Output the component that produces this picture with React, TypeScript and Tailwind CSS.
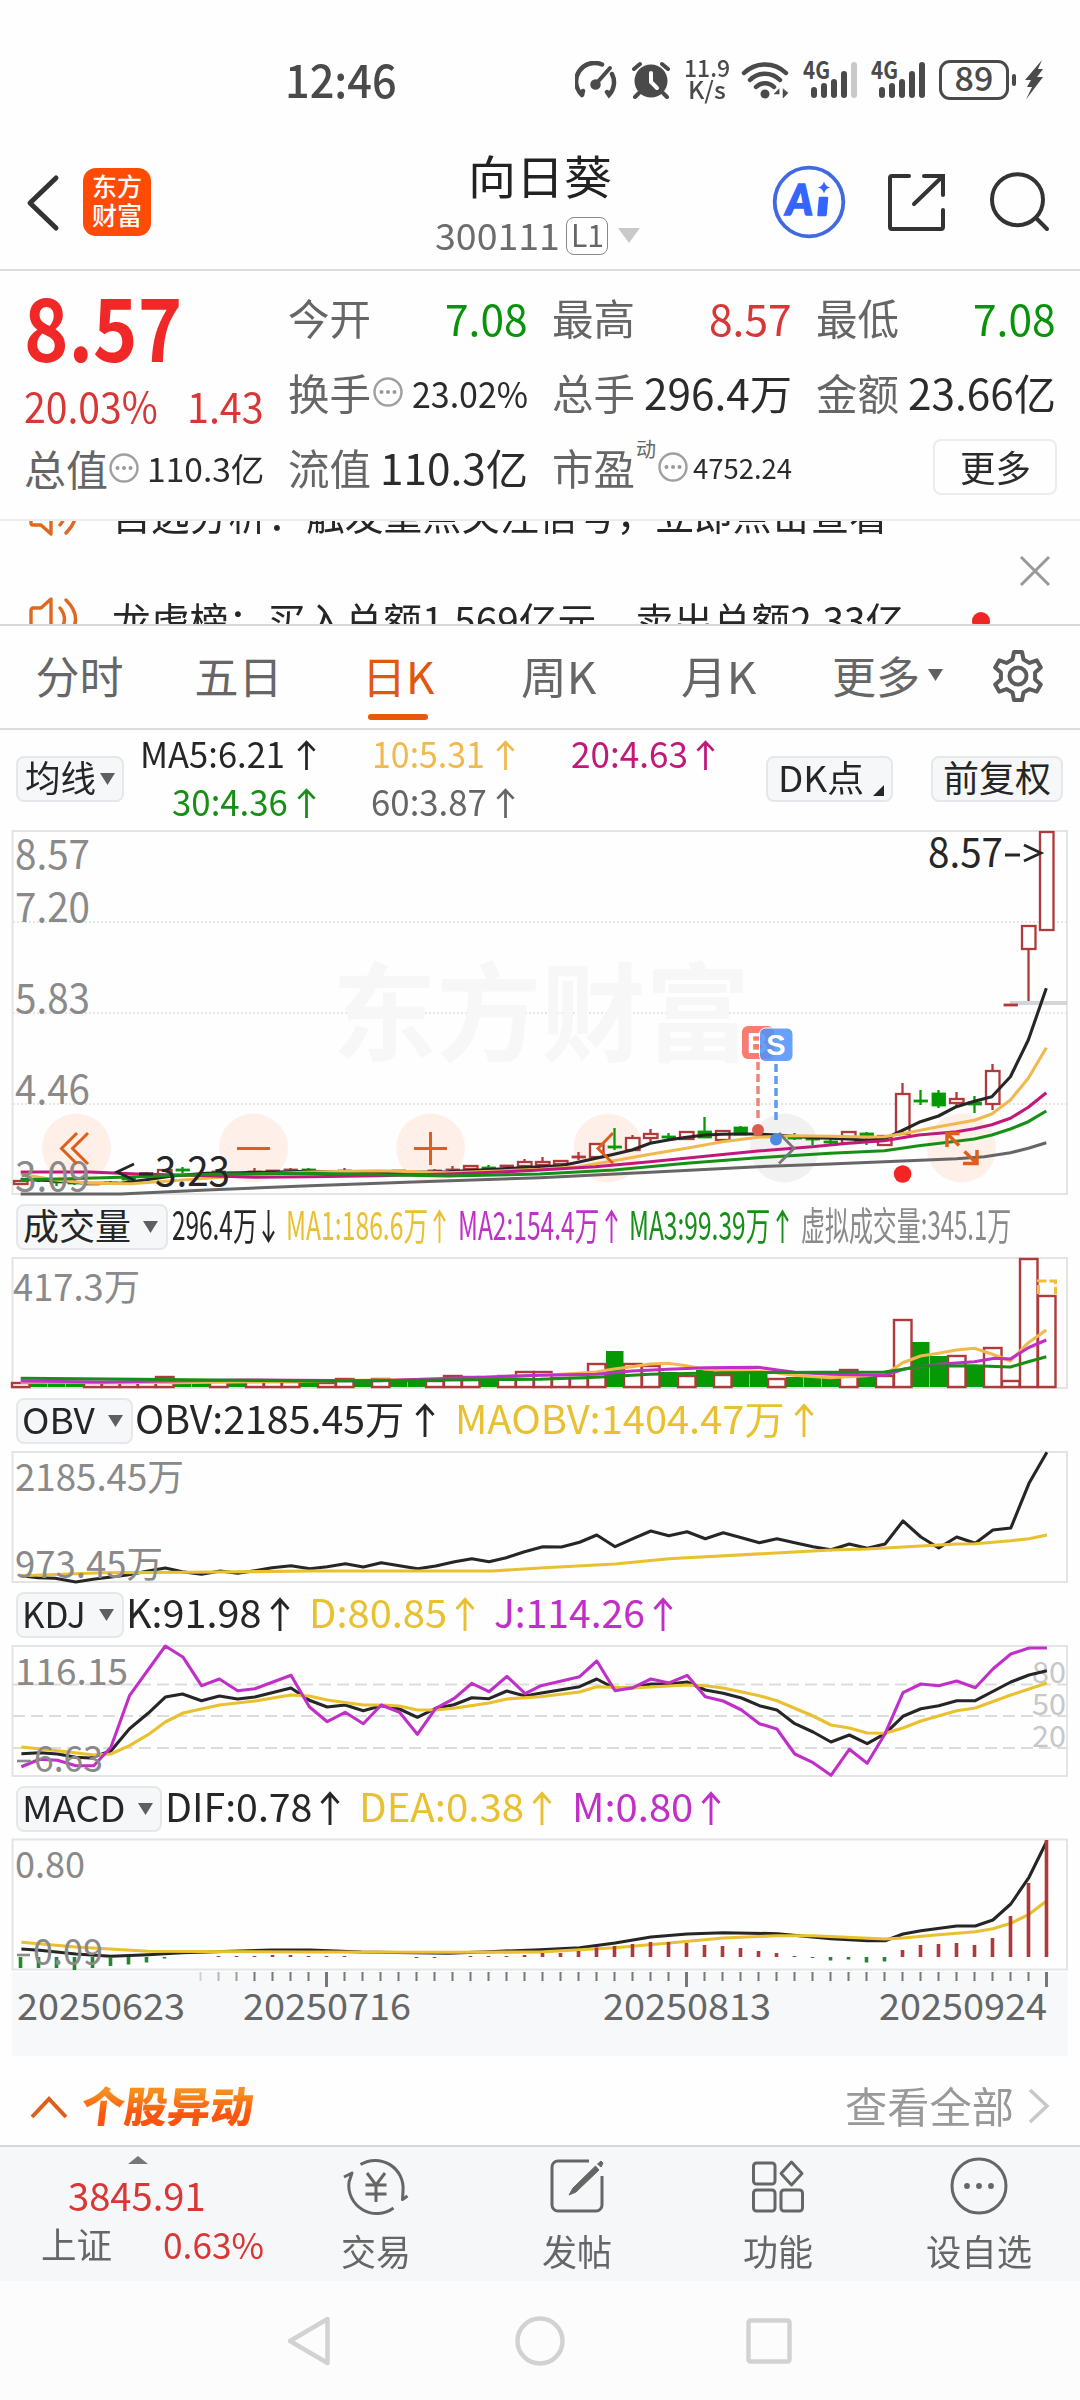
import React, { useLayoutEffect, useRef, useState } from "react";

const UP = "#b03a3a";
const DOWN = "#059a05";
const INK = "#262626";
const GOLD = "#e9c02f";
const AMBER = "#f0b94f";
const PURPLE = "#c02fc8";
const MAGENTA = "#bf1a7a";
const GREEN = "#178f17";
const GREY = "#666666";
const FRAME = "#e4e4e4";
const FONT = "'Noto Sans CJK SC', 'Noto Sans', sans-serif";

/** Text squeezed or stretched horizontally so that it fills its box. */
function Fit({ className = "", children }: { className?: string; children: React.ReactNode }) {
  const inner = useRef<HTMLSpanElement>(null);
  const [scale, setScale] = useState(1);
  useLayoutEffect(() => {
    const el = inner.current;
    if (el && el.parentElement && el.offsetWidth) setScale(el.parentElement.clientWidth / el.offsetWidth);
  }, []);
  return (
    <span className={"block shrink-0 whitespace-nowrap leading-none " + className}>
      <span ref={inner} className="inline-block origin-left" style={{ transform: `scaleX(${scale})` }}>
        {children}
      </span>
    </span>
  );
}

function Arrow({ className = "", down = false }: { className?: string; down?: boolean }) {
  return (
    <svg viewBox="0 0 20 34" preserveAspectRatio="none" className={"shrink-0 " + className} fill="none" stroke="currentColor" strokeWidth="2.9">
      {down ? <path d="M10 1v31M1.500 22.500 10 32l8.500-9.500" /> : <path d="M10 34V2.500M1.500 12 10 2.500l8.500 9.500" />}
    </svg>
  );
}

function Caret({ className = "" }: { className?: string }) {
  return (
    <svg viewBox="0 0 15 12" className={"h-3 w-[15px] shrink-0 " + className}>
      <path d="M0 0h15L7.500 12z" fill="#5f5f5f" />
    </svg>
  );
}

function Info({ className = "" }: { className?: string }) {
  return (
    <svg viewBox="0 0 30 30" className={"size-[30px] shrink-0 " + className}>
      <circle cx="15" cy="15" r="13.500" fill="none" stroke="#a0a0a0" strokeWidth="2.400" />
      <g fill="#999">
        <circle cx="8.500" cy="15" r="2" />
        <circle cx="15" cy="15" r="2" />
        <circle cx="21.500" cy="15" r="2" />
      </g>
    </svg>
  );
}

function Signal({ weak = false }: { weak?: boolean }) {
  return (
    <svg viewBox="0 0 56 40" className="h-10 w-14 shrink-0">
      <text x="0" y="19" fontSize="24" fontWeight="700" fontFamily={FONT} fill="#4a4a4a" textLength="27" lengthAdjust="spacingAndGlyphs">4G</text>
      <g stroke="#4a4a4a" strokeWidth="6" strokeLinecap="round">
        <path d="M11 30v5M21 26v9M31 22v13M41 14v21" />
        <path d="M51 5v30" stroke={weak ? "#c9c9c9" : "#4a4a4a"} />
      </g>
    </svg>
  );
}

function StatusBar() {
  return (
    <div className="flex h-[120px] shrink-0 pt-[58px] text-[#4a4a4a]">
      <Fit className="ml-[285px] mt-[-3px] w-28 text-[46px] font-medium">12:46</Fit>
      <svg viewBox="0 0 42 38" className="ml-[178px] mt-[3px] h-[38px] w-[42px] shrink-0" fill="none" stroke="#4a4a4a" strokeWidth="4.500" strokeLinecap="round">
        <path d="M27 3.500A18.500 18.500 0 0 0 7 34M7 34l1-4M37 13a18.500 18.500 0 0 1-3 21l-2-3" />
        <path d="M35 7 20 24" strokeWidth="4" />
        <circle cx="20.500" cy="23.500" r="3" fill="#4a4a4a" />
      </svg>
      <svg viewBox="0 0 40 38" className="ml-[14px] mt-[3px] h-[38px] w-10 shrink-0">
        <circle cx="20" cy="20" r="16.500" fill="#4a4a4a" />
        <path d="M3 8 9 3M37 8l-6-5M8 32l-4 4M32 32l4 4" stroke="#4a4a4a" strokeWidth="4" strokeLinecap="round" />
        <path d="M20 12v9l6 6" stroke="#fff" strokeWidth="4" fill="none" strokeLinecap="round" />
      </svg>
      <div className="ml-[13px] flex flex-col items-center">
        <Fit className="mt-[-3px] w-[46px] text-[24px] font-medium">11.9</Fit>
        <Fit className="mt-[-2px] w-[38px] text-[24px] font-medium">K/s</Fit>
      </div>
      <svg viewBox="0 0 48 38" className="ml-[11px] mt-[3px] h-[38px] w-12 shrink-0" fill="none" stroke="#4a4a4a" strokeWidth="4.500" strokeLinecap="round">
        <path d="M3 12a30 30 0 0 1 42 0M9 19a21 21 0 0 1 30 0M15 26a12.500 12.500 0 0 1 18 0" />
        <circle cx="24" cy="33" r="3" fill="#4a4a4a" strokeWidth="3" />
        <path d="m38 28-5 5h5zM42 28v9l5-5z" fill="#4a4a4a" strokeWidth="0.500" />
      </svg>
      <div className="ml-[14px] mt-[2px]"><Signal weak /></div>
      <div className="ml-[12px] mt-[2px]"><Signal /></div>
      <div className="ml-[12px] mt-[2px] flex h-10 w-[70px] shrink-0 justify-center rounded-[11px] border-[3px] border-[#4a4a4a]">
        <Fit className="mt-[-3px] w-[39px] text-[34px] font-medium">89</Fit>
      </div>
      <div className="ml-[3px] mt-[16px] h-3 w-1 rounded-sm bg-[#4a4a4a]" />
      <svg viewBox="0 0 20 40" className="ml-[8px] mt-[2px] h-10 w-5 shrink-0">
        <path d="M18 0 1 20h6l-4 7h5L2 39.500 19 17h-6l6-8h-5z" fill="#4a4a4a" />
      </svg>
    </div>
  );
}

function Header() {
  return (
    <div className="flex h-[151px] shrink-0 border-b-2 border-[#dcdcdc]">
      <svg viewBox="0 0 34 58" className="ml-[26px] mt-[54px] h-[58px] w-[34px] shrink-0" fill="none" stroke="#333" strokeWidth="5" strokeLinecap="round" strokeLinejoin="round">
        <path d="M30 4 4 29l26 25" />
      </svg>
      <div className="ml-[23px] mt-[48px] flex size-[68px] shrink-0 flex-col items-center rounded-[13px] bg-[#ff4b06] pt-[5px] text-[25px] font-medium leading-none text-white">
        <Fit className="w-[50px]">东方</Fit>
        <Fit className="mt-[4px] w-[50px]">财富</Fit>
      </div>
      <div className="ml-[283px] flex w-[208px] shrink-0 flex-col">
        <Fit className="ml-[34px] mt-[31px] w-[144px] text-[46px] text-[#222]">向日葵</Fit>
        <div className="mt-[19px] flex text-[36px] text-[#6c6c6c]">
          <Fit className="ml-px w-[125px]">300111</Fit>
          <div className="ml-[6px] mt-[1px] flex h-[38px] w-[42px] shrink-0 justify-center rounded-lg border border-[#888]">
            <Fit className="w-[33px] text-[31px] text-[#666]">L1</Fit>
          </div>
          <svg viewBox="0 0 22 15" className="ml-[10px] mt-[12px] h-[15px] w-[22px] shrink-0"><path d="M0 0h22L11 15z" fill="#c9c9c9" /></svg>
        </div>
      </div>
      <svg viewBox="0 0 74 74" className="ml-[130px] mt-[45px] size-[74px] shrink-0">
        <circle cx="37" cy="37" r="34.300" fill="none" stroke="#4169e1" strokeWidth="3.800" />
        <text x="14" y="50" fontFamily="Lato, sans-serif" fontWeight="900" fontSize="42" fontStyle="italic" fill="#3565ff" stroke="#3565ff" strokeWidth="1.500" textLength="27" lengthAdjust="spacingAndGlyphs">A</text>
        <path d="M48 33h7l-1.500 17h-7z" fill="#3565ff" stroke="#3565ff" strokeWidth="2.500" strokeLinejoin="round" />
        <path d="M52 16.500q1.500 5 6 6-4.500 1-6 6-1.500-5-6-6 4.500-1 6-6z" fill="#3565ff" />
      </svg>
      <svg viewBox="0 0 60 60" className="ml-[40px] mt-[52px] size-[60px] shrink-0" fill="none" stroke="#333" strokeWidth="4" strokeLinecap="round">
        <path d="M23 4H6a2 2 0 0 0-2 2v49a2 2 0 0 0 2 2h49a2 2 0 0 0 2-2V38M38 4h19v19M56 5 28 32" />
      </svg>
      <svg viewBox="0 0 64 64" className="ml-[42px] mt-[50px] size-16 shrink-0" fill="none" stroke="#333" strokeWidth="4" strokeLinecap="round">
        <circle cx="29.500" cy="29.700" r="25.500" />
        <path d="m48 48 11 11" />
      </svg>
    </div>
  );
}

function QuotePanel() {
  return (
    <div className="flex h-[250px] shrink-0 border-b-2 border-[#ececec] text-[42px] text-[#666]">
      <div className="ml-[24px] w-[240px] shrink-0">
        <Fit className="mt-[10px] w-[158px] text-[87px] font-bold text-[#f02828]">8.57</Fit>
        <div className="mt-[16px] flex justify-between text-[#d93636]">
          <Fit className="w-[134px]">20.03%</Fit>
          <Fit className="w-[77px]">1.43</Fit>
        </div>
        <div className="mt-[21px] flex items-center">
          <Fit className="w-[84px]">总值</Fit>
          <Info className="ml-px" />
          <Fit className="ml-[8px] w-[117px] text-[33px] text-[#2b2b2b]">110.3亿</Fit>
        </div>
      </div>
      <div className="ml-[24px] mt-[21px] grid h-[206px] w-[768px] shrink-0 grid-cols-[240px_240px_240px] grid-rows-[50px_50px_50px] gap-x-[24px] gap-y-[25px]">
        <div className="flex items-center justify-between"><Fit className="w-[83px]">今开</Fit><Fit className="w-[83px] text-[43px] text-[#0a930a]">7.08</Fit></div>
        <div className="flex items-center justify-between"><Fit className="w-[83px]">最高</Fit><Fit className="w-[83px] text-[43px] text-[#d93636]">8.57</Fit></div>
        <div className="flex items-center justify-between"><Fit className="w-[83px]">最低</Fit><Fit className="w-[83px] text-[43px] text-[#0a930a]">7.08</Fit></div>
        <div className="flex items-center"><Fit className="w-[83px]">换手</Fit><Info className="ml-[2px]" /><Fit className="ml-auto w-[116px] text-[36px] text-[#2b2b2b]">23.02%</Fit></div>
        <div className="flex items-center justify-between"><Fit className="w-[83px]">总手</Fit><Fit className="w-[148px] text-[42px] text-[#2b2b2b]">296.4万</Fit></div>
        <div className="flex items-center justify-between"><Fit className="w-[83px]">金额</Fit><Fit className="w-[148px] text-[42px] text-[#2b2b2b]">23.66亿</Fit></div>
        <div className="flex items-center justify-between"><Fit className="w-[83px]">流值</Fit><Fit className="w-[148px] text-[42px] text-[#2b2b2b]">110.3亿</Fit></div>
        <div className="flex items-center">
          <Fit className="w-[83px]">市盈</Fit>
          <Fit className="mb-[36px] ml-px w-[20px] text-[20px]">动</Fit>
          <Info className="ml-[2px]" />
          <Fit className="ml-auto w-[99px] text-[28px] text-[#2b2b2b]">4752.24</Fit>
        </div>
        <div className="flex items-center justify-end">
          <div className="mr-[-1px] flex h-[56px] w-[124px] items-center justify-center rounded-lg border-2 border-[#ececec]">
            <Fit className="mb-[3px] w-[71px] text-[36px] text-[#2b2b2b]">更多</Fit>
          </div>
        </div>
      </div>
    </div>
  );
}

function Speaker() {
  return (
    <svg viewBox="0 0 52 48" className="ml-[29px] h-12 w-[52px] shrink-0" fill="none" stroke="#dd6a22" strokeWidth="3.400" strokeLinecap="round" strokeLinejoin="round">
      <path d="M22 4 12 13H4a2 2 0 0 0-2 2v18a2 2 0 0 0 2 2h8l10 9zM31 13q9 11 0 22M37 5q19 19 0 38" />
    </svg>
  );
}

function Ticker() {
  return (
    <div className="relative h-[105px] shrink-0 overflow-hidden border-b-2 border-[#d8d8d8] text-[39px] text-[#262626]">
      <div className="mt-[-60px] flex h-[105px] items-center">
        <Speaker />
        <Fit className="ml-[31px] w-[776px]">自选分析：触发重点关注信号，立即点击查看</Fit>
      </div>
      <div className="flex h-[106px] items-center">
        <Speaker />
        <Fit className="ml-[31px] w-[792px]">龙虎榜：买入总额1.569亿元，卖出总额2.33亿</Fit>
        <div className="ml-[68px] mt-[4px] size-[18px] rounded-full bg-[#f02525]" />
      </div>
      <svg viewBox="0 0 32 32" className="absolute right-[29px] top-[34px] size-8" stroke="#999" strokeWidth="3"><path d="m2 2 28 28M30 2 2 30" /></svg>
    </div>
  );
}

function Tabs() {
  return (
    <div className="flex h-[104px] shrink-0 border-b-2 border-[#dcdcdc] text-[44px] text-[#666]">
      {["分时", "五日"].map((t) => (
        <div key={t} className="flex w-[159px] shrink-0 justify-center pt-[27px]"><Fit className="w-[88px]">{t}</Fit></div>
      ))}
      <div className="flex w-[160px] shrink-0 flex-col items-center pt-[27px] text-[#e0580c]">
        <Fit className="w-[72px]">日K</Fit>
        <div className="mt-[17px] h-1.5 w-[60px] rounded-full bg-[#e5590c]" />
      </div>
      {["周K", "月K"].map((t) => (
        <div key={t} className="flex w-[160px] shrink-0 justify-center pt-[27px]"><Fit className="w-[75px]">{t}</Fit></div>
      ))}
      <div className="ml-[34px] flex pt-[27px]"><Fit className="w-[88px]">更多</Fit><Caret className="ml-[8px] mt-[16px]" /></div>
      <svg viewBox="0 0 54 54" className="ml-[48px] mt-[23px] size-[54px] shrink-0" fill="none" stroke="#5c5c5c" strokeWidth="4" strokeLinejoin="round">
        <path d="M23 3h8l1.500 7.500 6 3.400 7.300-2.500 4 7-5.700 5.100v7l5.700 5.100-4 7-7.300-2.500-6 3.400L31 51h-8l-1.500-7.500-6-3.400-7.300 2.500-4-7 5.700-5.100v-7l-5.700-5.100 4-7 7.300 2.500 6-3.400z" />
        <circle cx="27" cy="27" r="8.500" />
      </svg>
    </div>
  );
}

const chip = "flex h-[46px] shrink-0 items-start rounded-lg border-2 border-[#e5e7ea] bg-[#f6f7f9] text-[36px] text-[#262626]";

function AverageRow() {
  return (
    <div className="flex h-[100px] shrink-0 text-[36px]">
      <div className={chip + " ml-[16px] mt-[26px] w-[108px]"}>
        <Fit className="ml-[7px] w-[71px]">均线</Fit>
        <Caret className="ml-[4px] mt-[15px]" />
      </div>
      <div className="ml-[16px] mt-[4px] w-[626px] shrink-0">
        <div className="flex h-12">
          <Fit className="w-[145px] text-[#262626]">MA5:6.21</Fit>
          <Arrow className="ml-[12px] mt-[6px] h-[30px] w-[19px] text-[#262626]" />
          <Fit className="ml-[56px] w-[113px] text-[#f0b94f]">10:5.31</Fit>
          <Arrow className="ml-[11px] mt-[6px] h-[30px] w-[19px] text-[#f0b94f]" />
          <Fit className="ml-[56px] w-[117px] text-[#bf1a7a]">20:4.63</Fit>
          <Arrow className="ml-[8px] mt-[6px] h-[30px] w-[19px] text-[#bf1a7a]" />
        </div>
        <div className="flex h-12">
          <Fit className="ml-[32px] w-[116px] text-[#178f17]">30:4.36</Fit>
          <Arrow className="ml-[9px] mt-[6px] h-[30px] w-[19px] text-[#178f17]" />
          <Fit className="ml-[55px] w-[116px] text-[#666]">60:3.87</Fit>
          <Arrow className="ml-[9px] mt-[6px] h-[30px] w-[19px] text-[#666]" />
        </div>
      </div>
      <div className={chip + " mt-[26px] w-[127px]"}>
        <Fit className="ml-[10px] w-[86px]">DK点</Fit>
        <svg viewBox="0 0 11 11" className="ml-[9px] mt-[27px] size-[11px] shrink-0"><path d="M11 0v11H0z" fill="#262626" /></svg>
      </div>
      <div className={chip + " ml-[38px] mt-[26px] w-[132px] justify-center"}><Fit className="w-[108px]">前复权</Fit></div>
    </div>
  );
}

type Pt = [number, number];

/** Joins a list of x,y pairs into the points of a polyline. */
function Line({ left, right, top, color, width = 3.1 }: { left: Pt[]; right: Pt[]; top: number; color: string; width?: number }) {
  const k = 2.9037;
  const pts = [...left.map(([x, y]) => [x / k, top + y / 3]), ...right.map(([x, y]) => [540 + x / k, top + y / 3])];
  return <polyline points={pts.map((p) => p[0].toFixed(1) + "," + p[1].toFixed(1)).join(" ")} fill="none" stroke={color} strokeWidth={width} strokeLinejoin="round" />;
}

function Label({ x, y, w, size = 37, color = "#8a8a8a", children }: { x: number; y: number; w: number; size?: number; color?: string; children: string }) {
  return <text x={x} y={y} fontSize={size} fill={color} fontFamily={FONT} textLength={w} lengthAdjust="spacingAndGlyphs">{children}</text>;
}

const at = (k: number) => 1046.5 - 18 * k;

// kind, days before the last session, body top, body bottom, wick top, wick bottom
type Candle = ["h" | "f" | "r", number, number, number, number, number];
const CANDLES: Candle[] = [
  ["h", 0, 832, 930, 832, 930], ["h", 1, 926, 949, 926, 1001], ["r", 2, 1004, 1006, 1004, 1006],
  ["h", 3, 1071, 1104, 1064, 1110], ["f", 4, 1102, 1105, 1096, 1113], ["h", 5, 1099, 1103, 1092, 1107],
  ["f", 6, 1093, 1106, 1090, 1108], ["f", 7, 1100, 1102, 1090, 1105], ["h", 8, 1094, 1134, 1083, 1134],
  ["h", 9, 1136, 1145, 1136, 1145], ["f", 10, 1133, 1137, 1132, 1145], ["h", 11, 1132, 1143, 1132, 1143],
  ["f", 12, 1141, 1143, 1139, 1146], ["f", 13, 1138, 1140, 1137, 1145], ["f", 14, 1137, 1139, 1133, 1140],
  ["f", 17, 1127, 1135, 1126, 1135], ["h", 18, 1131, 1140, 1131, 1140], ["f", 19, 1131, 1138, 1117, 1138],
  ["h", 20, 1132, 1139, 1132, 1140], ["f", 21, 1136, 1138, 1133, 1141], ["h", 22, 1134, 1138, 1129, 1143],
  ["h", 23, 1138, 1150, 1135, 1150], ["f", 24, 1146, 1148, 1128, 1150], ["h", 25, 1144, 1157, 1144, 1157],
  ["r", 26, 1156, 1158, 1152, 1160], ["h", 27, 1161, 1164, 1160, 1165], ["h", 28, 1162, 1165, 1157, 1166],
  ["h", 29, 1162, 1166, 1159, 1167], ["r", 30, 1165, 1167, 1165, 1167], ["f", 31, 1167, 1169, 1165, 1170],
  ["h", 32, 1166, 1169, 1165, 1170], ["r", 33, 1169, 1170, 1166, 1171], ["r", 34, 1170, 1172, 1169, 1173],
  ["f", 35, 1172, 1174, 1171, 1175], ["r", 36, 1170, 1172, 1170, 1172], ["f", 37, 1172, 1173, 1171, 1174],
  ["r", 39, 1170, 1172, 1168, 1173], ["f", 41, 1169, 1171, 1168, 1172], ["r", 42, 1169, 1170, 1168, 1171],
  ["r", 43, 1170, 1172, 1170, 1173], ["r", 44, 1171, 1172, 1168, 1173], ["r", 46, 1171, 1173, 1170, 1174],
  ["f", 48, 1169, 1171, 1167, 1173], ["h", 49, 1170, 1176, 1170, 1176], ["r", 50, 1173, 1175, 1172, 1176],
  ["f", 51, 1178, 1180, 1177, 1181], ["r", 52, 1182, 1184, 1181, 1185], ["r", 53, 1183, 1185, 1182, 1185],
  ["f", 54, 1182, 1184, 1180, 1185], ["f", 55, 1181, 1183, 1179, 1186], ["f", 56, 1179, 1181, 1178, 1182],
  ["h", 57, 1181, 1184, 1181, 1184],
];

function CandleChart() {
  return (
    <svg viewBox="0 830 1080 366" className="h-[366px] w-[1080px] shrink-0">
      <rect x="12.500" y="831" width="1054.500" height="363" fill="none" stroke={FRAME} strokeWidth="2" />
      <g stroke="#e0e0e0" strokeWidth="1.500" strokeDasharray="2 2"><path d="M13 922h1054M13 1013h1054M13 1104h1054" /></g>
      <text x="332" y="1053" fontSize="107" fontWeight="700" fill="#f7f7f7" fontFamily={FONT} textLength="418" lengthAdjust="spacingAndGlyphs">东方财富</text>
      <g>
        {[76.5, 253.5, 430.5, 608, 961.5].map((x) => <circle key={x} cx={x} cy="1148" r="34.500" fill="#fef0e8" />)}
        <circle cx="784.500" cy="1148" r="34.500" fill="#f1f1f1" />
      </g>
      <path d="M1010 1003h57" stroke="#d3d5d8" strokeWidth="4" />
      {CANDLES.map(([kind, k, t, b, wt, wb]) => {
        const x = at(k);
        const c = kind === "f" ? DOWN : UP;
        return (
          <g key={k} stroke={c} strokeWidth="2.300">
            <path d={`M${x} ${wt}V${t}M${x} ${b}V${wb}`} />
            <rect x={x - 6.5} y={t} width="13.500" height={b - t} fill={kind === "h" ? "#fff" : c} strokeWidth={kind === "h" ? 2.3 : 0.8} />
          </g>
        );
      })}
      <Line top={820} color={INK} left={[[60, 1078], [160, 1082], [260, 1090], [350, 1090], [420, 1080], [500, 1068], [600, 1060], [700, 1058], [900, 1054], [1100, 1058], [1300, 1055], [1450, 1047]]} right={[[0, 1040], [60, 1037], [110, 1027], [163, 1015], [215, 1003], [267, 990], [320, 970], [372, 960], [425, 952], [480, 945], [530, 943], [582, 942], [633, 942], [685, 945], [737, 949], [790, 953], [842, 955], [895, 957], [947, 960], [1000, 957], [1020, 947], [1055, 930], [1105, 905], [1157, 888], [1209, 860], [1261, 844], [1312, 830], [1366, 770], [1418, 660], [1470, 505]]} />
      <Line top={820} color={AMBER} left={[[60, 1062], [160, 1080], [260, 1090], [380, 1091], [520, 1081], [640, 1072], [760, 1062], [900, 1056], [1100, 1052], [1300, 1058], [1450, 1053]]} right={[[0, 1048], [110, 1040], [215, 1022], [320, 1003], [425, 985], [530, 965], [633, 952], [737, 947], [842, 949], [947, 951], [1000, 950], [1060, 940], [1157, 920], [1261, 901], [1312, 882], [1366, 840], [1418, 775], [1470, 683]]} />
      <Line top={820} color={MAGENTA} left={[[60, 1056], [260, 1056], [400, 1062], [550, 1066], [740, 1072], [900, 1070], [1100, 1067], [1300, 1062], [1450, 1056]]} right={[[0, 1050], [160, 1040], [320, 1025], [480, 1009], [633, 993], [790, 980], [895, 970], [1000, 962], [1100, 945], [1209, 935], [1261, 926], [1312, 914], [1366, 895], [1418, 862], [1470, 818]]} />
      <Line top={820} color={GREEN} left={[[60, 1079], [200, 1076], [400, 1070], [640, 1062], [900, 1060], [1150, 1065], [1300, 1068]]} right={[[0, 1062], [215, 1050], [425, 1030], [633, 1013], [842, 1000], [1000, 992], [1100, 977], [1209, 964], [1261, 957], [1312, 945], [1366, 927], [1418, 905], [1470, 873]]} />
      <Line top={820} color={GREY} left={[[60, 1122], [350, 1122], [600, 1110], [900, 1097], [1200, 1086]]} right={[[0, 1073], [320, 1057], [633, 1040], [842, 1032], [1053, 1023], [1209, 1016], [1290, 1010], [1366, 998], [1418, 985], [1470, 968]]} />
      <Label x={15} y={869} w={75} size={40}>8.57</Label>
      <Label x={15} y={922} w={75} size={40}>7.20</Label>
      <Label x={15} y={1013} w={75} size={40}>5.83</Label>
      <Label x={15} y={1104} w={75} size={40}>4.46</Label>
      <Label x={15} y={1191} w={75} size={40}>3.09</Label>
      <Label x={155} y={1186} w={75} size={40} color={INK}>3.23</Label>
      <Label x={928} y={867} w={75} size={40} color={INK}>8.57</Label>
      <g fill="none" stroke={INK} strokeWidth="2.800">
        <path d="m134 1164-17 8 17 8M139 1174h14" />
        <path d="M1005 855h15M1024 845l17 8-17 8" />
      </g>
      <g fill="none" stroke="#dc5f1c" strokeWidth="3">
        <path d="m77 1133-15.500 15.500L77 1164M88 1133l-15.500 15.500L88 1164M237 1148.500h33M414 1148.500h33M430.500 1132v33M613 1133l-15 15.500 15 15" />
        <path d="M959.600 1133.500H947V1147M947 1133.500l12 12M963 1163.500h14V1150M964.500 1151.500l12.500 12" strokeWidth="3.500" />
      </g>
      <path d="m779 1133 15 15.500-15 15" fill="none" stroke="#777" strokeWidth="2.800" />
      <g strokeDasharray="8 4" strokeWidth="3.500">
        <path d="M758 1062v56" stroke="#ee8478" />
        <path d="M776 1064v57" stroke="#5f9cf0" />
      </g>
      <circle cx="758" cy="1130" r="6" fill="#dd5c4c" />
      <circle cx="776" cy="1139.500" r="6" fill="#4d8ae6" />
      <circle cx="902.600" cy="1174" r="8.800" fill="#f22424" />
      <rect x="742" y="1026" width="32" height="33" rx="6" fill="#f87d6e" />
      <text x="747" y="1053" fontSize="29" fontWeight="700" fill="#fff" fontFamily="'Liberation Sans', sans-serif">B</text>
      <rect x="759.500" y="1028" width="33.500" height="33.500" rx="6" fill="#4f92f8" fillOpacity="0.860" stroke="#fff" />
      <text x="776" y="1055" fontSize="29" fontWeight="700" textAnchor="middle" fill="#fff" fontFamily="'Liberation Sans', sans-serif">S</text>
    </svg>
  );
}

// days before the last session -> top edge of the volume bar; "r" is a rising day
const VOLUME: ["r" | "g", number][] = [
  ["r", 1296], ["r", 1259], ["r", 1381], ["r", 1348], ["g", 1366], ["r", 1356], ["g", 1357], ["g", 1343], ["r", 1320], ["r", 1376],
  ["g", 1377], ["r", 1370], ["g", 1378], ["g", 1378], ["g", 1378], ["r", 1379], ["g", 1375], ["g", 1374], ["r", 1375], ["g", 1371],
  ["r", 1376], ["g", 1373], ["r", 1366], ["r", 1364], ["g", 1352], ["r", 1364], ["r", 1378], ["r", 1378], ["r", 1372], ["r", 1372],
  ["r", 1376], ["g", 1379], ["r", 1377], ["r", 1376], ["r", 1381], ["g", 1380], ["g", 1381], ["r", 1379], ["g", 1381], ["r", 1379],
  ["r", 1383], ["g", 1381], ["r", 1382], ["r", 1382], ["r", 1382], ["g", 1381], ["r", 1381], ["g", 1380], ["g", 1381], ["r", 1377],
  ["r", 1382], ["r", 1383], ["r", 1383], ["r", 1383], ["g", 1383], ["g", 1383], ["g", 1383], ["r", 1383],
];

function VolumeChart() {
  return (
    <svg viewBox="0 1256 1080 134" className="h-[134px] w-[1080px] shrink-0">
      <rect x="12.500" y="1258" width="1054.500" height="130" fill="none" stroke={FRAME} strokeWidth="2" />
      {VOLUME.map(([kind, y], k) =>
        kind === "g" ? (
          <rect key={k} x={at(k) - 8.5} y={y - 1} width="17.500" height={1388 - y} fill={DOWN} />
        ) : (
          <rect key={k} x={at(k) - 8.5} y={y} width="17.500" height={1387 - y} fill="#fff" stroke={UP} strokeWidth="2.400" />
        ),
      )}
      <path d="M1038.500 1294v-13h17v13" fill="none" stroke="#f0bd35" strokeWidth="3" strokeDasharray="9 3" />
      <Line top={1190} color={AMBER} left={[[60, 577], [300, 577], [500, 578], [900, 573], [1300, 567]]} right={[[0, 556], [60, 553], [110, 550], [163, 546], [215, 537], [267, 530], [320, 522], [372, 520], [425, 527], [480, 538], [530, 541], [600, 541], [685, 548], [737, 556], [842, 563], [947, 557], [1010, 548], [1053, 518], [1105, 498], [1157, 490], [1209, 480], [1261, 475], [1312, 492], [1366, 513], [1418, 458], [1470, 420]]} />
      <Line top={1190} color={PURPLE} left={[[60, 573], [300, 576], [500, 573], [700, 570], [1100, 572]]} right={[[0, 556], [163, 553], [267, 543], [372, 538], [480, 533], [633, 532], [690, 540], [740, 547], [842, 553], [1000, 556], [1060, 536], [1157, 523], [1261, 515], [1320, 505], [1366, 507], [1418, 473], [1470, 450]]} />
      <Line top={1190} color={GREEN} left={[[60, 565], [400, 568], [700, 571], [1000, 573], [1300, 570]]} right={[[0, 568], [163, 562], [320, 553], [530, 548], [1000, 546], [1060, 537], [1105, 528], [1261, 527], [1366, 531], [1418, 515], [1470, 500]]} />
      <Label x={13} y={1301} w={127}>417.3万</Label>
    </svg>
  );
}

function ObvChart() {
  return (
    <svg viewBox="0 1450 1080 134" className="h-[134px] w-[1080px] shrink-0">
      <rect x="12.500" y="1452" width="1054.500" height="130" fill="none" stroke={FRAME} strokeWidth="2" />
      <Line top={1190} color={INK} left={[[62, 1157], [110, 1163], [160, 1165], [220, 1176], [270, 1168], [370, 1155], [430, 1143], [480, 1134], [530, 1145], [585, 1153], [640, 1143], [690, 1150], [740, 1142], [790, 1133], [845, 1127], [900, 1136], [950, 1130], [1003, 1121], [1055, 1131], [1107, 1118], [1160, 1127], [1213, 1136], [1265, 1128], [1320, 1115], [1370, 1106], [1420, 1115], [1470, 1103], [1523, 1085]]} right={[[8, 1070], [62, 1071], [115, 1057], [165, 1035], [218, 1070], [270, 1046], [322, 1023], [374, 1037], [427, 1025], [480, 1046], [532, 1028], [585, 1043], [637, 1058], [688, 1046], [740, 1058], [793, 1070], [845, 1079], [898, 1062], [950, 1075], [1002, 1062], [1054, 993], [1106, 1041], [1158, 1074], [1210, 1041], [1264, 1060], [1315, 1020], [1367, 1014], [1420, 880], [1472, 787]]} />
      <Line top={1190} color={GOLD} left={[[62, 1157], [300, 1148], [550, 1147], [900, 1143], [1430, 1143]]} right={[[0, 1134], [218, 1122], [374, 1106], [845, 1080], [950, 1077], [1210, 1062], [1264, 1061], [1367, 1052], [1420, 1046], [1472, 1035]]} />
      <Label x={15} y={1491} w={169}>2185.45万</Label>
      <Label x={15} y={1578} w={148}>973.45万</Label>
    </svg>
  );
}

function KdjChart() {
  return (
    <svg viewBox="0 1644 1080 134" className="h-[134px] w-[1080px] shrink-0">
      <rect x="12.500" y="1646" width="1054.500" height="130" fill="none" stroke={FRAME} strokeWidth="2" />
      <g stroke="#dcdcdc" strokeWidth="1.800" strokeDasharray="12 6"><path d="M13 1684.500h1054M13 1716h1054M13 1748h1054" /></g>
      <Label x={1032} y={1683} w={34} size={29} color="#c8c8c8">80</Label>
      <Label x={1032} y={1715} w={34} size={29} color="#c8c8c8">50</Label>
      <Label x={1032} y={1747} w={34} size={29} color="#c8c8c8">20</Label>
      <Line top={1580} color={INK} left={[[62, 521], [115, 518], [167, 522], [220, 532], [262, 534], [322, 513], [376, 446], [430, 400], [480, 351], [530, 342], [585, 362], [637, 348], [690, 357], [740, 351], [845, 324], [898, 361], [950, 381], [1002, 375], [1055, 392], [1107, 377], [1160, 387], [1212, 412], [1265, 385], [1318, 374], [1370, 353], [1420, 356], [1472, 333], [1525, 348]]} right={[[0, 340], [115, 320], [165, 297], [218, 326], [270, 323], [322, 312], [375, 312], [427, 306], [480, 330], [532, 340], [585, 354], [637, 377], [688, 390], [740, 431], [793, 456], [845, 486], [898, 465], [950, 491], [1002, 461], [1054, 409], [1106, 386], [1158, 377], [1210, 362], [1264, 362], [1367, 306], [1420, 285], [1472, 272]]} />
      <Line top={1580} color={GOLD} left={[[62, 501], [167, 512], [272, 525], [322, 522], [376, 497], [430, 464], [480, 426], [532, 399], [637, 375], [740, 363], [845, 345], [898, 348], [950, 360], [1055, 375], [1107, 375], [1160, 378], [1212, 390], [1265, 390], [1318, 385], [1420, 369], [1472, 357]]} right={[[0, 350], [115, 336], [165, 320], [270, 324], [427, 315], [480, 317], [532, 324], [637, 347], [688, 362], [793, 408], [845, 435], [898, 444], [950, 459], [1002, 460], [1054, 444], [1106, 423], [1210, 392], [1264, 384], [1367, 345], [1472, 309]]} />
      <Line top={1580} color={PURPLE} left={[[62, 560], [115, 538], [167, 541], [220, 557], [272, 557], [322, 502], [376, 347], [480, 198], [532, 232], [585, 317], [637, 297], [690, 332], [740, 326], [845, 286], [898, 380], [950, 425], [1002, 397], [1055, 431], [1107, 375], [1160, 397], [1212, 463], [1265, 385], [1318, 356], [1370, 310], [1420, 335], [1472, 289], [1525, 341]]} right={[[0, 318], [115, 290], [165, 243], [218, 332], [270, 323], [322, 297], [375, 309], [427, 286], [480, 350], [532, 363], [585, 390], [637, 431], [688, 447], [740, 522], [793, 548], [845, 586], [898, 508], [950, 550], [1002, 461], [1054, 338], [1106, 312], [1158, 317], [1210, 303], [1264, 323], [1315, 267], [1367, 222], [1420, 204], [1472, 204]]} />
      <Label x={15} y={1685} w={113}>116.15</Label>
      <path d="M17 1761h14" stroke="#8a8a8a" strokeWidth="2.600" />
      <Label x={34} y={1772} w={69}>6.63</Label>
    </svg>
  );
}

// days before the last session, bar end below or above the zero line
const MACD_BARS: [number, number][] = [
  [57, 1968], [56, 1968], [55, 1968], [54, 1970], [53, 1968], [52, 1966], [51, 1964.5], [50, 1962.5], [49, 1958.5],
  [46, 1956], [45, 1956], [44, 1956], [43, 1955], [42, 1955], [41, 1956], [40, 1956], [39, 1956], [35, 1958], [34, 1958],
  [32, 1956], [31, 1956], [30, 1956], [29, 1955], [28, 1953], [27, 1953], [26, 1951], [25, 1947.5], [24, 1946], [23, 1944], [22, 1942],
  [21, 1942], [20, 1943], [19, 1945], [18, 1946], [17, 1948], [16, 1951], [15, 1953], [14, 1956], [13, 1958], [12, 1960.5], [11, 1959.5],
  [10, 1962.5], [9, 1961.5], [8, 1950], [7, 1945], [6, 1944], [5, 1943], [4, 1945], [3, 1938], [2, 1916], [1, 1883], [0, 1840],
];

function MacdChart() {
  return (
    <svg viewBox="0 1838 1080 134" className="h-[134px] w-[1080px] shrink-0">
      <rect x="12.500" y="1839.500" width="1054.500" height="130" fill="none" stroke={FRAME} strokeWidth="2" />
      <Line top={1580} color={INK} left={[[62, 1107], [115, 1111], [220, 1122], [322, 1129], [430, 1124], [530, 1118], [790, 1110], [900, 1110], [1050, 1116], [1300, 1120], [1420, 1115]]} right={[[0, 1109], [115, 1103], [218, 1089], [322, 1071], [427, 1062], [532, 1058], [690, 1061], [845, 1076], [950, 1082], [1002, 1082], [1054, 1062], [1106, 1052], [1210, 1038], [1264, 1038], [1315, 1020], [1367, 972], [1420, 892], [1472, 783]]} />
      <Line top={1580} color={GOLD} left={[[62, 1087], [220, 1101], [430, 1114], [900, 1116], [1300, 1117]]} right={[[0, 1116], [218, 1103], [375, 1089], [532, 1074], [688, 1067], [793, 1067], [1002, 1077], [1054, 1074], [1158, 1064], [1264, 1055], [1315, 1046], [1367, 1030], [1420, 1003], [1472, 962]]} />
      {MACD_BARS.map(([k, y]) => (
        <path key={k} d={`M${at(k)} 1957V${y}`} stroke={y > 1957 ? "#218a2b" : UP} strokeWidth="3.600" />
      ))}
      <Label x={15} y={1878} w={70}>0.80</Label>
      <path d="M17 1955h13" stroke="#8a8a8a" strokeWidth="2.600" />
      <Label x={33} y={1965} w={70}>0.09</Label>
    </svg>
  );
}

function DateAxis() {
  const ticks = Array.from({ length: 48 }, (_, k) => k);
  return (
    <svg viewBox="0 1972 1080 85" className="h-[85px] w-[1080px] shrink-0">
      <rect x="12" y="1972" width="1055.500" height="84" fill="#f7f8fa" />
      {ticks.map((k) => (
        <path key={k} d={`M${at(k)} 1972v${k % 20 === 0 ? 15 : 9}`} stroke="#777" strokeWidth={k % 20 === 0 ? 3 : 2} opacity={k > 44 ? (49 - k) / 5 - 0.1 : 1} />
      ))}
      <Label x={17} y={2020} w={168} color="#666">20250623</Label>
      <Label x={243} y={2020} w={168} color="#666">20250716</Label>
      <Label x={603} y={2020} w={168} color="#666">20250813</Label>
      <Label x={879} y={2020} w={168} color="#666">20250924</Label>
    </svg>
  );
}

const legendRow = "flex h-[60px] shrink-0 pt-[8px] text-[39px]";

function ChartStack() {
  return (
    <div className="flex shrink-0 flex-col">
      <CandleChart />
      <div className={legendRow}>
        <div className={chip + " ml-[16px] w-[152px]"}><Fit className="ml-[5px] w-[108px]">成交量</Fit><Caret className="ml-[12px] mt-[15px]" /></div>
        <Fit className="ml-[4px] w-[85px] text-[#262626]">296.4万</Fit>
        <Arrow down className="ml-[5px] mt-[5px] h-[34px] w-[13px] text-[#262626]" />
        <Fit className="ml-[11px] w-[142px] text-[#e9c02f]">MA1:186.6万</Fit>
        <Arrow className="ml-[5px] mt-[5px] h-[34px] w-[13px] text-[#e9c02f]" />
        <Fit className="ml-[12px] w-[141px] text-[#c02fc8]">MA2:154.4万</Fit>
        <Arrow className="ml-[6px] mt-[5px] h-[34px] w-[13px] text-[#c02fc8]" />
        <Fit className="ml-[11px] w-[141px] text-[#178f17]">MA3:99.39万</Fit>
        <Arrow className="ml-[6px] mt-[5px] h-[34px] w-[13px] text-[#178f17]" />
        <Fit className="ml-[12px] w-[210px] text-[#8a8a8a]">虚拟成交量:345.1万</Fit>
      </div>
      <VolumeChart />
      <div className={legendRow}>
        <div className={chip + " ml-[16px] w-[117px]"}><Fit className="ml-[4px] w-[73px]">OBV</Fit><Caret className="ml-[13px] mt-[15px]" /></div>
        <Fit className="ml-[2px] w-[269px] text-[#262626]">OBV:2185.45万</Fit>
        <Arrow className="ml-[11px] mt-[5px] h-[34px] w-[20px] text-[#262626]" />
        <Fit className="ml-[20px] w-[329px] text-[#e9c02f]">MAOBV:1404.47万</Fit>
        <Arrow className="ml-[10px] mt-[5px] h-[34px] w-[20px] text-[#e9c02f]" />
      </div>
      <ObvChart />
      <div className={legendRow}>
        <div className={chip + " ml-[16px] w-[108px]"}><Fit className="ml-[4px] w-[64px]">KDJ</Fit><Caret className="ml-[13px] mt-[15px]" /></div>
        <Fit className="ml-[2px] w-[135px] text-[#262626]">K:91.98</Fit>
        <Arrow className="ml-[9px] mt-[5px] h-[34px] w-[20px] text-[#262626]" />
        <Fit className="ml-[19px] w-[138px] text-[#e9c02f]">D:80.85</Fit>
        <Arrow className="ml-[8px] mt-[5px] h-[34px] w-[20px] text-[#e9c02f]" />
        <Fit className="ml-[19px] w-[151px] text-[#c02fc8]">J:114.26</Fit>
        <Arrow className="ml-[8px] mt-[5px] h-[34px] w-[20px] text-[#c02fc8]" />
      </div>
      <KdjChart />
      <div className={legendRow}>
        <div className={chip + " ml-[16px] w-[146px]"}><Fit className="ml-[4px] w-[103px]">MACD</Fit><Caret className="ml-[13px] mt-[15px]" /></div>
        <Fit className="ml-[3px] w-[147px] text-[#262626]">DIF:0.78</Fit>
        <Arrow className="ml-[8px] mt-[5px] h-[34px] w-[20px] text-[#262626]" />
        <Fit className="ml-[19px] w-[165px] text-[#e9c02f]">DEA:0.38</Fit>
        <Arrow className="ml-[8px] mt-[5px] h-[34px] w-[20px] text-[#e9c02f]" />
        <Fit className="ml-[20px] w-[121px] text-[#c02fc8]">M:0.80</Fit>
        <Arrow className="ml-[8px] mt-[5px] h-[34px] w-[20px] text-[#c02fc8]" />
      </div>
      <MacdChart />
      <DateAxis />
    </div>
  );
}

function Movers() {
  return (
    <div className="flex h-[90px] shrink-0 border-b-2 border-[#d8d8d8]">
      <svg viewBox="0 0 38 24" className="ml-[30px] mt-[38px] h-6 w-[38px] shrink-0" fill="none" stroke="#dc5f1c" strokeWidth="4"><path d="M2 22 19 4l17 18" /></svg>
      <Fit className="ml-[14px] mt-[26px] w-[172px] text-[43px] font-black">
        <span className="block -skew-x-[7deg] bg-gradient-to-b from-[#f58f1e] from-20% to-[#fd5510] to-70% bg-clip-text text-transparent">个股异动</span>
      </Fit>
      <Fit className="ml-[591px] mt-[27px] w-[169px] text-[42px] text-[#999]">查看全部</Fit>
      <svg viewBox="0 0 22 36" className="ml-[14px] mt-[31px] h-9 w-[22px] shrink-0" fill="none" stroke="#c8c8c8" strokeWidth="3.500"><path d="m2 2 17 16L2 34" /></svg>
    </div>
  );
}

function NavItem({ label, wide = false, children }: { label: string; wide?: boolean; children: React.ReactNode }) {
  return (
    <div className="flex w-[201px] shrink-0 flex-col items-center pt-[7px]">
      <svg viewBox="0 0 66 64" className="h-16 w-[66px]" fill="none" stroke="#666" strokeWidth="3">{children}</svg>
      {wide ? <Fit className="mt-[14px] w-[106px]">{label}</Fit> : <Fit className="mt-[14px] w-[70px]">{label}</Fit>}
    </div>
  );
}

function BottomNav() {
  return (
    <div className="flex h-[134px] shrink-0 bg-[#f6f7f9] text-[36px] text-[#666]">
      <div className="w-[275px] shrink-0">
        <svg viewBox="0 0 20 8" className="ml-[128px] mt-[9px] h-2 w-5"><path d="M10 0l10 8H0z" fill="#777" /></svg>
        <Fit className="ml-[68px] mt-[11px] w-[138px] text-[39px] text-[#d93636]">3845.91</Fit>
        <div className="mt-[11px] flex">
          <Fit className="ml-[41px] w-[71px]">上证</Fit>
          <Fit className="ml-[51px] w-[101px] text-[#d93636]">0.63%</Fit>
        </div>
      </div>
      <NavItem label="交易">
        <path d="M17.500 10.500A28 28 0 0 1 60 37l-.5 8.500 5-3.500M50.500 54A28 28 0 0 1 6 28l3-9-8 4" strokeLinejoin="round" />
        <path d="m24 19 9 12 9-12M22.500 31h21M22.500 40h21M33 31v17" />
      </NavItem>
      <NavItem label="发帖">
        <path d="M45 7H14a6 6 0 0 0-6 6v38a6 6 0 0 0 6 6h38a6 6 0 0 0 6-6V22" />
        <path d="M51.500 12 29 34l-4 7 7-3 23-22zM53.500 10l3.500 3 2-4-2-2z" fill="#666" strokeWidth="1" strokeLinejoin="round" />
      </NavItem>
      <NavItem label="功能">
        <rect x="8.500" y="9" width="21.500" height="21" rx="3" />
        <rect x="8.500" y="36" width="21.500" height="21" rx="3" />
        <rect x="36" y="36" width="21.500" height="21" rx="3" />
        <path d="M46.500 8 57 19.500 46.500 31 36 19.500z" strokeLinejoin="round" />
      </NavItem>
      <NavItem label="设自选" wide>
        <circle cx="33" cy="32" r="27" />
        <g fill="#666" stroke="none"><circle cx="21" cy="32" r="2.900" /><circle cx="33" cy="32" r="2.900" /><circle cx="45" cy="32" r="2.900" /></g>
      </NavItem>
    </div>
  );
}

function SystemNav() {
  return (
    <div className="flex h-[118px] shrink-0 bg-[#fcfcfc] pt-[34px]">
      <svg viewBox="0 0 52 52" className="ml-[282px] size-[52px]" fill="none" stroke="#d2d2d2" strokeWidth="4.500" strokeLinejoin="round"><path d="M45.500 4v44L8 26z" /></svg>
      <svg viewBox="0 0 52 52" className="ml-[180px] size-[52px]" fill="none" stroke="#d2d2d2" strokeWidth="4.500"><circle cx="26" cy="26" r="22.500" /></svg>
      <svg viewBox="0 0 52 52" className="ml-[177px] size-[52px]" fill="none" stroke="#d2d2d2" strokeWidth="4.500"><rect x="5.500" y="5.500" width="41" height="41" rx="2" /></svg>
    </div>
  );
}

export default function App() {
  return (
    <div className="flex h-[2400px] w-[1080px] flex-col overflow-hidden bg-[#fefefe] font-['Noto_Sans_CJK_SC','Noto_Sans',sans-serif]">
      <StatusBar />
      <Header />
      <QuotePanel />
      <Ticker />
      <Tabs />
      <AverageRow />
      <ChartStack />
      <Movers />
      <BottomNav />
      <SystemNav />
    </div>
  );
}
